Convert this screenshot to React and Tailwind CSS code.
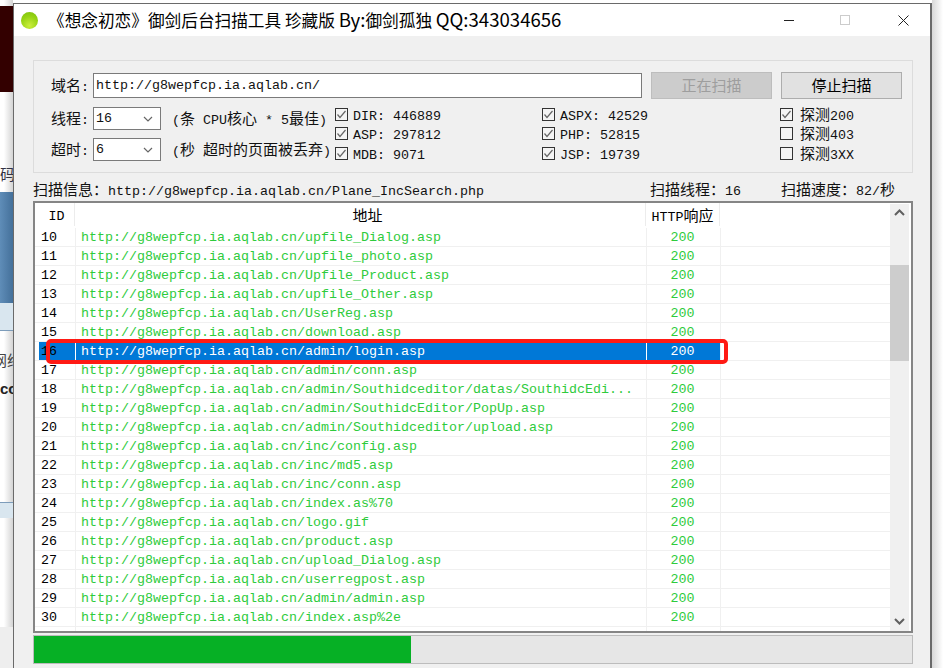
import React from "react";

function T({ children, cjk = "text-[15px]" }) {
  const parts = String(children).split(/([\u3000-\u9fff\uff00-\uffef]+)/);
  return (
    <span className="font-['Liberation_Mono',monospace] text-[13.33px] whitespace-pre">
      {parts.map((p, i) =>
        /[\u3000-\u9fff\uff00-\uffef]/.test(p) ? (
          <span key={i} className={"font-['Noto_Sans_CJK_SC',sans-serif] " + cjk}>{p}</span>
        ) : (
          <span key={i}>{p}</span>
        )
      )}
    </span>
  );
}

const H = "http://g8wepfcp.ia.aqlab.cn/";
const rows = [
  [10, "upfile_Dialog.asp"],
  [11, "upfile_photo.asp"],
  [12, "Upfile_Product.asp"],
  [13, "upfile_Other.asp"],
  [14, "UserReg.asp"],
  [15, "download.asp"],
  [16, "admin/login.asp"],
  [17, "admin/conn.asp"],
  [18, "admin/Southidceditor/datas/SouthidcEdi..."],
  [19, "admin/SouthidcEditor/PopUp.asp"],
  [20, "admin/Southidceditor/upload.asp"],
  [21, "inc/config.asp"],
  [22, "inc/md5.asp"],
  [23, "inc/conn.asp"],
  [24, "index.as%70"],
  [25, "logo.gif"],
  [26, "product.asp"],
  [27, "upload_Dialog.asp"],
  [28, "userregpost.asp"],
  [29, "admin/admin.asp"],
  [30, "index.asp%2e"],
  [31, "admin/SouthidcEditor/Dialog/help/upload.asp"],
];

function Check({ on, label, wide }) {
  return (
    <div className="h-[19.5px] flex items-center">
      <div className="w-[13px] h-[13px] border border-[#333] bg-[#f4f4f4] flex items-center justify-center shrink-0">
        {on && (
          <svg width="11" height="11" viewBox="0 0 11 11" fill="none">
            <path d="M1.5 5.5 L4 8.5 L9.5 2" stroke="#666" strokeWidth="1.2" />
          </svg>
        )}
      </div>
      <div className={(wide ? "ml-[7px]" : "ml-[5px]") + " text-[#111]"}><T>{label}</T></div>
    </div>
  );
}

function Select({ value }) {
  return (
    <div className="w-[68px] h-[23px] shrink-0 border border-[#7a7a7a] bg-white flex items-center justify-between pl-[2px] pr-[7px]">
      <T>{value}</T>
      <svg width="10" height="6" viewBox="0 0 10 6" fill="none">
        <path d="M1 1 L5 5 L9 1" stroke="#666" strokeWidth="1.2" />
      </svg>
    </div>
  );
}

function Row({ id, path }) {
  const sel = id === 16;
  return (
    <div className={"h-[19px] shrink-0 flex border-b border-[#f0f0f0] " + (sel ? "text-white" : "text-[#2ecb3c]")}>
      <div className="w-[4px] shrink-0" />
      <div className={"w-[36px] shrink-0 pl-[2px] leading-[14px] " + (sel ? "bg-[#0078d7] text-[#000]" : "text-black")}>
        <T>{id}</T>
      </div>
      <div className={"w-[571px] shrink-0 pl-[5px] leading-[14px] border-l overflow-hidden " + (sel ? "bg-[#0078d7] border-white" : "border-[#f0f0f0]")}>
        <T>{H + path}</T>
      </div>
      <div className={"w-[75px] shrink-0 pr-[2px] text-center leading-[14px] border-l border-r " + (sel ? "bg-[#0078d7] border-l-white border-r-[#f0f0f0]" : "border-[#f0f0f0]")}>
        <T>200</T>
      </div>
    </div>
  );
}

export default function App() {
  return (
    <div className="relative w-[943px] h-[668px] overflow-hidden flex bg-white">
      {/* page behind, left side */}
      <div className="w-[13px] h-full shrink-0 flex flex-col overflow-hidden bg-gradient-to-r from-white from-30% to-[#d4d4d4] text-[#222]">
        <div className="h-[6px] shrink-0" />
        <div className="h-[86px] shrink-0 bg-[#330000]" />
        <div className="h-[72px] shrink-0" />
        <div className="h-[19px] shrink-0 text-[15px] leading-[19px] font-['Noto_Sans_CJK_SC',sans-serif] whitespace-nowrap text-[#334]">码</div>
        <div className="h-[9px] shrink-0" />
        <div className="h-[111px] shrink-0 bg-gradient-to-r from-[#5f8db8] to-[#44709a]" />
        <div className="h-[28px] shrink-0 bg-[#d9e6ef] border-b border-[#7d9cba]" />
        <div className="h-[21px] shrink-0" />
        <div className="h-[16px] shrink-0 text-[15px] leading-[16px] font-['Noto_Sans_CJK_SC',sans-serif] whitespace-nowrap text-[#444] -ml-[8px]">网络</div>
        <div className="h-[14px] shrink-0" />
        <div className="h-[13px] shrink-0 text-[15px] leading-[13px] font-bold font-['Liberation_Sans',sans-serif]">co</div>
        <div className="h-[107px] shrink-0" />
        <div className="h-[16px] shrink-0 bg-[#d9e6ef] border-t border-[#7d9cba]" />
        <div className="h-[109px] shrink-0" />
        <div className="flex-1 bg-[#eeeeee]" />
      </div>

      {/* window */}
      <div className="w-[919px] h-[665px] mt-[3px] shrink-0 border-t border-l border-r-2 border-[#6a6a6a] bg-[#f0f0f0] flex flex-col">
        {/* title bar */}
        <div className="h-[32px] shrink-0 bg-white flex items-center pl-[7px]">
          <div className="w-[17px] h-[17px] rounded-full bg-[radial-gradient(circle_at_50%_80%,#cbee3c_0%,#98d414_55%,#7cc00c_100%)] shrink-0" />
          <div className="ml-[10px] -mt-[1px] text-[16.67px] leading-[24px] text-black font-['Noto_Sans_CJK_SC',sans-serif] whitespace-pre w-[530px] shrink-0">
            《想念初恋》御剑后台扫描工具 珍藏版 <span className="text-[18.6px]">By:</span>御剑孤独 <span className="text-[18.6px]">QQ:343034656</span>
          </div>
          <div className="ml-[206px] w-[10px] h-[1px] bg-[#222] shrink-0" />
          <div className="ml-[46px] w-[10px] h-[10px] border border-[#ccc] shrink-0" />
          <svg className="ml-[48px] shrink-0" width="11" height="11" viewBox="0 0 11 11" fill="none">
            <path d="M0.5 0.5 L10.5 10.5 M10.5 0.5 L0.5 10.5" stroke="#222" strokeWidth="1" />
          </svg>
        </div>

        <div className="flex-1 flex flex-col pl-[19px] pr-[18px] pt-[24px]">
          {/* group */}
          <div className="w-[880px] h-[113px] shrink-0 border border-[#dcdcdc] pl-[17px] pt-[11px] text-[#111]">
            <div className="h-[27px] flex items-center">
              <div className="w-[42px] shrink-0"><T>域名:</T></div>
              <div className="w-[549px] h-[25px] shrink-0 border border-[#7a7a7a] bg-white flex items-center pl-[2px]">
                <T>http://g8wepfcp.ia.aqlab.cn/</T>
              </div>
              <div className="ml-[9px] w-[121px] h-[27px] shrink-0 bg-[#cccccc] border border-[#bdbdbd] flex items-center justify-center text-[#9e9e9e]">
                <T>正在扫描</T>
              </div>
              <div className="ml-[9px] w-[121px] h-[27px] shrink-0 bg-[#e1e1e1] border border-[#adadad] flex items-center justify-center text-black">
                <T>停止扫描</T>
              </div>
            </div>
            <div className="flex mt-[8px]">
              <div className="w-[284px] shrink-0 flex flex-col gap-[8px]">
                <div className="h-[23px] flex items-center">
                  <div className="w-[42px] shrink-0"><T>线程:</T></div>
                  <Select value="16" />
                  <div className="ml-[11px] w-[163px] shrink-0 whitespace-nowrap"><T>(条 CPU核心 * 5最佳)</T></div>
                </div>
                <div className="h-[23px] flex items-center">
                  <div className="w-[42px] shrink-0"><T>超时:</T></div>
                  <Select value="6" />
                  <div className="ml-[11px] w-[163px] shrink-0 whitespace-nowrap"><T>(秒 超时的页面被丢弃)</T></div>
                </div>
              </div>
              <div className="w-[207px] shrink-0 -mt-[2.5px]">
                <Check on label="DIR: 446889" />
                <Check on label="ASP: 297812" />
                <Check on label="MDB: 9071" />
              </div>
              <div className="w-[238px] shrink-0 -mt-[2.5px]">
                <Check on label="ASPX: 42529" />
                <Check on label="PHP: 52815" />
                <Check on label="JSP: 19739" />
              </div>
              <div className="flex-1 -mt-[2.5px]">
                <Check on wide label="探测200" />
                <Check wide label="探测403" />
                <Check wide label="探测3XX" />
              </div>
            </div>
          </div>

          {/* info */}
          <div className="h-[28px] shrink-0 flex items-center pt-[5px] text-[#111]">
            <div className="w-[617px] shrink-0"><T>{"扫描信息\uff1ahttp://g8wepfcp.ia.aqlab.cn/Plane_IncSearch.php"}</T></div>
            <div className="w-[131px] shrink-0"><T>{"扫描线程\uff1a16"}</T></div>
            <div><T>{"扫描速度\uff1a82/秒"}</T></div>
          </div>

          {/* list */}
          <div className="w-[880px] h-[432px] shrink-0 border-2 border-[#858585] bg-white flex overflow-hidden">
            <div className="w-[855px] shrink-0 flex flex-col overflow-hidden">
              <div className="h-[23px] shrink-0 flex text-black">
                <div className="w-[40px] shrink-0 text-center pl-[4px] border-r border-[#ececec] leading-[23px]"><T>ID</T></div>
                <div className="w-[571px] shrink-0 text-center pl-[15px] border-r border-[#ececec] leading-[23px]"><T>地址</T></div>
                <div className="w-[74px] shrink-0 text-center border-r border-[#ececec] leading-[23px]"><T>HTTP响应</T></div>
              </div>
              <div className="h-[2px] shrink-0" />
              {rows.map(([id, p]) => <Row key={id} id={id} path={p} />)}
            </div>
            <div className="w-[19px] shrink-0 bg-[#f0f0f0] flex flex-col mt-[1px]">
              <div className="h-[17px] shrink-0 flex items-center justify-center">
                <svg width="11" height="7" viewBox="0 0 11 7" fill="none">
                  <path d="M1 6 L5.5 1.5 L10 6" stroke="#606060" strokeWidth="2" />
                </svg>
              </div>
              <div className="h-[44px] shrink-0" />
              <div className="h-[96px] shrink-0 bg-[#cdcdcd]" />
              <div className="flex-1" />
              <div className="h-[17px] shrink-0 flex items-center justify-center mb-[1px]">
                <svg width="11" height="7" viewBox="0 0 11 7" fill="none">
                  <path d="M1 1 L5.5 5.5 L10 1" stroke="#606060" strokeWidth="2" />
                </svg>
              </div>
            </div>
          </div>

          {/* progress */}
          <div className="w-[880px] h-[29px] mt-[2px] shrink-0 border border-[#bcbcbc] bg-[#e6e6e6]">
            <div className="w-[377px] h-full bg-[#06b025]" />
          </div>
        </div>
      </div>

      {/* page behind, right side */}
      <div className="flex-1 h-full bg-gradient-to-r from-[#d8d8d8] to-white" />

      {/* red annotation */}
      <div className="absolute left-[46px] top-[339px] w-[682px] h-[25px] border-[4px] border-[#ff1a14] rounded-[5px]" />
    </div>
  );
}
